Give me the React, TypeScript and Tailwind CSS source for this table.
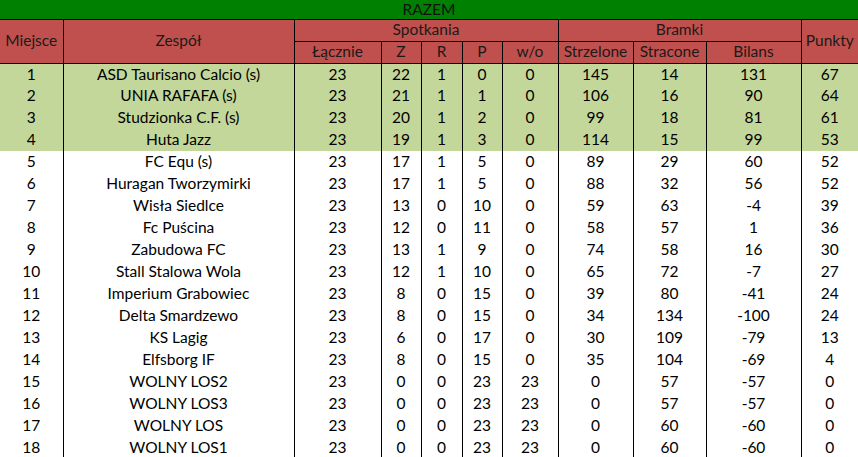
import React from "react"

type Row = [number, string, number, number, number, number, number, number, number, number, number]

const rows: Row[] = [
  [1, "ASD Taurisano Calcio (s)", 23, 22, 1, 0, 0, 145, 14, 131, 67],
  [2, "UNIA RAFAFA (s)", 23, 21, 1, 1, 0, 106, 16, 90, 64],
  [3, "Studzionka C.F. (s)", 23, 20, 1, 2, 0, 99, 18, 81, 61],
  [4, "Huta Jazz", 23, 19, 1, 3, 0, 114, 15, 99, 53],
  [5, "FC Equ (s)", 23, 17, 1, 5, 0, 89, 29, 60, 52],
  [6, "Huragan Tworzymirki", 23, 17, 1, 5, 0, 88, 32, 56, 52],
  [7, "Wisła Siedlce", 23, 13, 0, 10, 0, 59, 63, -4, 39],
  [8, "Fc Puścina", 23, 12, 0, 11, 0, 58, 57, 1, 36],
  [9, "Zabudowa FC", 23, 13, 1, 9, 0, 74, 58, 16, 30],
  [10, "Stall Stalowa Wola", 23, 12, 1, 10, 0, 65, 72, -7, 27],
  [11, "Imperium Grabowiec", 23, 8, 0, 15, 0, 39, 80, -41, 24],
  [12, "Delta Smardzewo", 23, 8, 0, 15, 0, 34, 134, -100, 24],
  [13, "KS Lagig", 23, 6, 0, 17, 0, 30, 109, -79, 13],
  [14, "Elfsborg IF", 23, 8, 0, 15, 0, 35, 104, -69, 4],
  [15, "WOLNY LOS2", 23, 0, 0, 23, 23, 0, 57, -57, 0],
  [16, "WOLNY LOS3", 23, 0, 0, 23, 23, 0, 57, -57, 0],
  [17, "WOLNY LOS", 23, 0, 0, 23, 23, 0, 60, -60, 0],
  [18, "WOLNY LOS1", 23, 0, 0, 23, 23, 0, 60, -60, 0],
]

const widths = [63, 231, 87, 40, 41, 40, 56, 75, 73, 95, 57]

export default function App() {
  return (
    <div className="w-[858px] h-[457px] overflow-hidden bg-white" style={{ fontFamily: "Lato, 'Open Sans', sans-serif" }}>
      <table className="table-fixed border-collapse text-[15.5px] leading-none text-black">
        <colgroup>
          {widths.map((w, i) => (
            <col key={i} style={{ width: w }} />
          ))}
        </colgroup>
        <thead>
          <tr className="h-[19px]">
            <th colSpan={11} className="bg-[#008000] border-b border-black font-normal text-[#111] p-0 text-center">
              RAZEM
            </th>
          </tr>
          <tr className="h-[22px] bg-[#c0504d] text-[#1a1a1a]">
            <th rowSpan={2} className="border-r border-b border-black font-normal p-0">Miejsce</th>
            <th rowSpan={2} className="border-x border-b border-black font-normal p-0">Zespół</th>
            <th colSpan={5} className="border-x border-b border-black font-normal p-0">Spotkania</th>
            <th colSpan={3} className="border-x border-b border-black font-normal p-0">Bramki</th>
            <th rowSpan={2} className="border-l border-b border-black font-normal p-0">Punkty</th>
          </tr>
          <tr className="h-[22px] bg-[#c0504d] text-[#1a1a1a]">
            {["Łącznie", "Z", "R", "P", "w/o", "Strzelone", "Stracone", "Bilans"].map((h) => (
              <th key={h} className="border-x border-b border-black font-normal p-0">
                {h}
              </th>
            ))}
          </tr>
        </thead>
        <tbody>
          {rows.map((r, i) => (
            <tr key={i} className={i < 4 ? "h-[22px] bg-[#c4d79b]" : "h-[22px] bg-white"}>
              {r.map((c, j) => (
                <td
                  key={j}
                  className={
                    j === 0
                      ? "border-r border-black p-0 text-center"
                      : j === 10
                      ? "border-l border-black p-0 text-center"
                      : "border-x border-black p-0 text-center"
                  }
                >
                  {c}
                </td>
              ))}
            </tr>
          ))}
        </tbody>
      </table>
    </div>
  )
}
